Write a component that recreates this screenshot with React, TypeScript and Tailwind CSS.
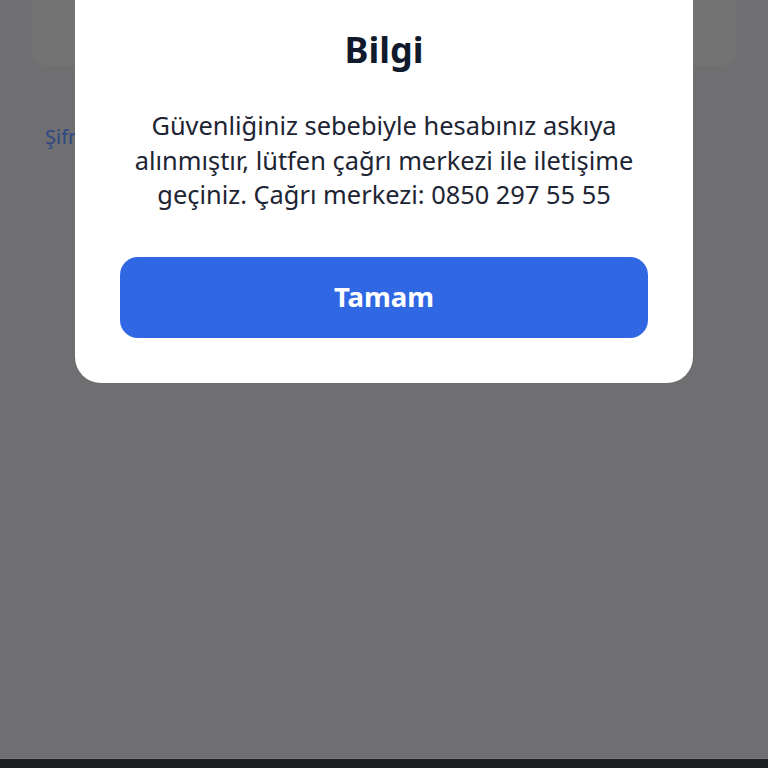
export default function App() {
  const font = { fontFamily: '"Noto Sans", "Open Sans", sans-serif' };

  return (
    <div
      className="relative flex h-[768px] w-[768px] flex-col overflow-hidden bg-[#6f6f71]"
      style={font}
    >
      {/* dimmed page behind the dialog */}
      <div className="flex flex-1 flex-col px-8">
        <div className="h-[66px] w-full rounded-b-2xl bg-[#737374]" />
        <div className="mt-[56px] -ml-[64px] pl-[77px] text-[20px] text-[#2e4785]">
          Şifremi unuttum
        </div>
      </div>
      <div className="h-[10px] border-t border-[#7a7a7e] bg-[#1e1f22]" />

      {/* dialog */}
      <div className="absolute -top-6 left-[75px] w-[618px] rounded-[26px] bg-white px-[45px] pt-[52px] pb-[45px]">
        <h2 className="text-center text-[36px] leading-[44px] font-bold text-[#101a2c]">
          Bilgi
        </h2>
        <p className="mt-[36px] text-center text-[25.4px] leading-[34.5px] text-[#1d2433]">
          <span className="block">Güvenliğiniz sebebiyle hesabınız askıya</span>
          <span className="block">alınmıştır, lütfen çağrı merkezi ile iletişime</span>
          <span className="block">geçiniz. Çağrı merkezi: 0850 297 55 55</span>
        </p>
        <button className="mt-[45px] flex h-[81px] w-full items-center justify-center rounded-[18px] bg-[#3068e4] text-[27.5px] font-bold text-white">
          Tamam
        </button>
      </div>
    </div>
  );
}
